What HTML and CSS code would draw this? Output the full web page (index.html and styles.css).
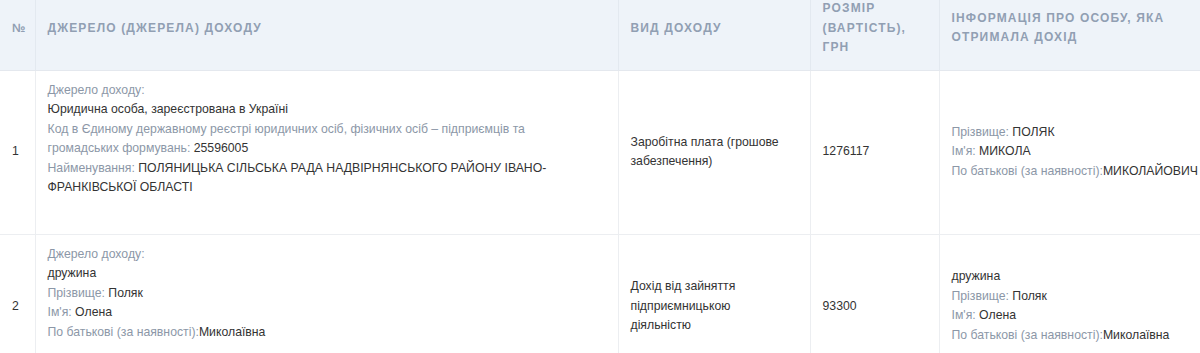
FILE: index.html
```html
<!DOCTYPE html>
<html lang="uk">
<head>
<meta charset="utf-8">
<title>Доходи</title>
<link rel="stylesheet" href="styles.css">
</head>
<body>
<div class="wrap">
<table class="income">
  <colgroup>
    <col class="c-num">
    <col class="c-src">
    <col class="c-type">
    <col class="c-amount">
    <col class="c-person">
  </colgroup>
  <thead>
    <tr>
      <th>№</th>
      <th>Джерело (джерела) доходу</th>
      <th>Вид доходу</th>
      <th>Розмір (вартість), грн</th>
      <th>Інформація про особу, яка отримала дохід</th>
    </tr>
  </thead>
  <tbody>
    <tr>
      <td>1</td>
      <td>
        <div class="src">
          <div><span class="lbl">Джерело доходу:</span></div>
          <div>Юридична особа, зареєстрована в Україні</div>
          <div><span class="lbl">Код в Єдиному державному реєстрі юридичних осіб, фізичних осіб – підприємців та громадських формувань:</span> 25596005</div>
          <div><span class="lbl">Найменування:</span> ПОЛЯНИЦЬКА СІЛЬСЬКА РАДА НАДВІРНЯНСЬКОГО РАЙОНУ ІВАНО-ФРАНКІВСЬКОЇ ОБЛАСТІ</div>
        </div>
      </td>
      <td>Заробітна плата (грошове забезпечення)</td>
      <td>1276117</td>
      <td>
        <div><span class="lbl">Прізвище:</span> ПОЛЯК</div>
        <div><span class="lbl">Ім'я:</span> МИКОЛА</div>
        <div class="nowrap"><span class="lbl">По батькові (за наявності):</span>МИКОЛАЙОВИЧ</div>
      </td>
    </tr>
    <tr>
      <td>2</td>
      <td>
        <div class="src">
          <div><span class="lbl">Джерело доходу:</span></div>
          <div>дружина</div>
          <div><span class="lbl">Прізвище:</span> Поляк</div>
          <div><span class="lbl">Ім'я:</span> Олена</div>
          <div><span class="lbl">По батькові (за наявності):</span>Миколаївна</div>
        </div>
      </td>
      <td>Дохід від зайняття підприємницькою діяльністю</td>
      <td>93300</td>
      <td>
        <div>дружина</div>
        <div><span class="lbl">Прізвище:</span> Поляк</div>
        <div><span class="lbl">Ім'я:</span> Олена</div>
        <div class="nowrap"><span class="lbl">По батькові (за наявності):</span>Миколаївна</div>
      </td>
    </tr>
  </tbody>
</table>
</div>
</body>
</html>
```
FILE: styles.css
```css
html, body {
  margin: 0;
  padding: 0;
  overflow: hidden;
  background: #ffffff;
}
body {
  font-family: "Liberation Sans", Arial, sans-serif;
  font-size: 12.25px;
  line-height: 19.5px;
  color: #333333;
}
.wrap {
  width: 1200px;
  overflow: hidden;
}
.income {
  width: 1240px;
  margin-top: -17px;
  border-collapse: collapse;
  table-layout: fixed;
}
.c-num { width: 35px; }
.c-src { width: 583px; }
.c-type { width: 192px; }
.c-amount { width: 129px; }
.c-person { width: 301px; }

.income th {
  background: #eef3f9;
  color: #919fb3;
  font-size: 12px;
  font-weight: bold;
  text-transform: uppercase;
  letter-spacing: 1.15px;
  text-align: left;
  vertical-align: middle;
  padding: 16px 12px 12px;
  border-left: 1px solid #e3e9f0;
  border-bottom: 1px solid #e4e8ee;
}
.income th:first-child,
.income td:first-child {
  border-left: none;
}
.income td {
  vertical-align: middle;
  padding: 10px 24px 10px 12px;
  border-left: 1px solid #eceef1;
  border-bottom: 1px solid #eceef1;
}
.income td:first-child {
  padding-right: 8px;
}
.src {
  padding-bottom: 26px;
}
.lbl {
  color: #8c97a7;
}
.nowrap {
  white-space: nowrap;
}
```
